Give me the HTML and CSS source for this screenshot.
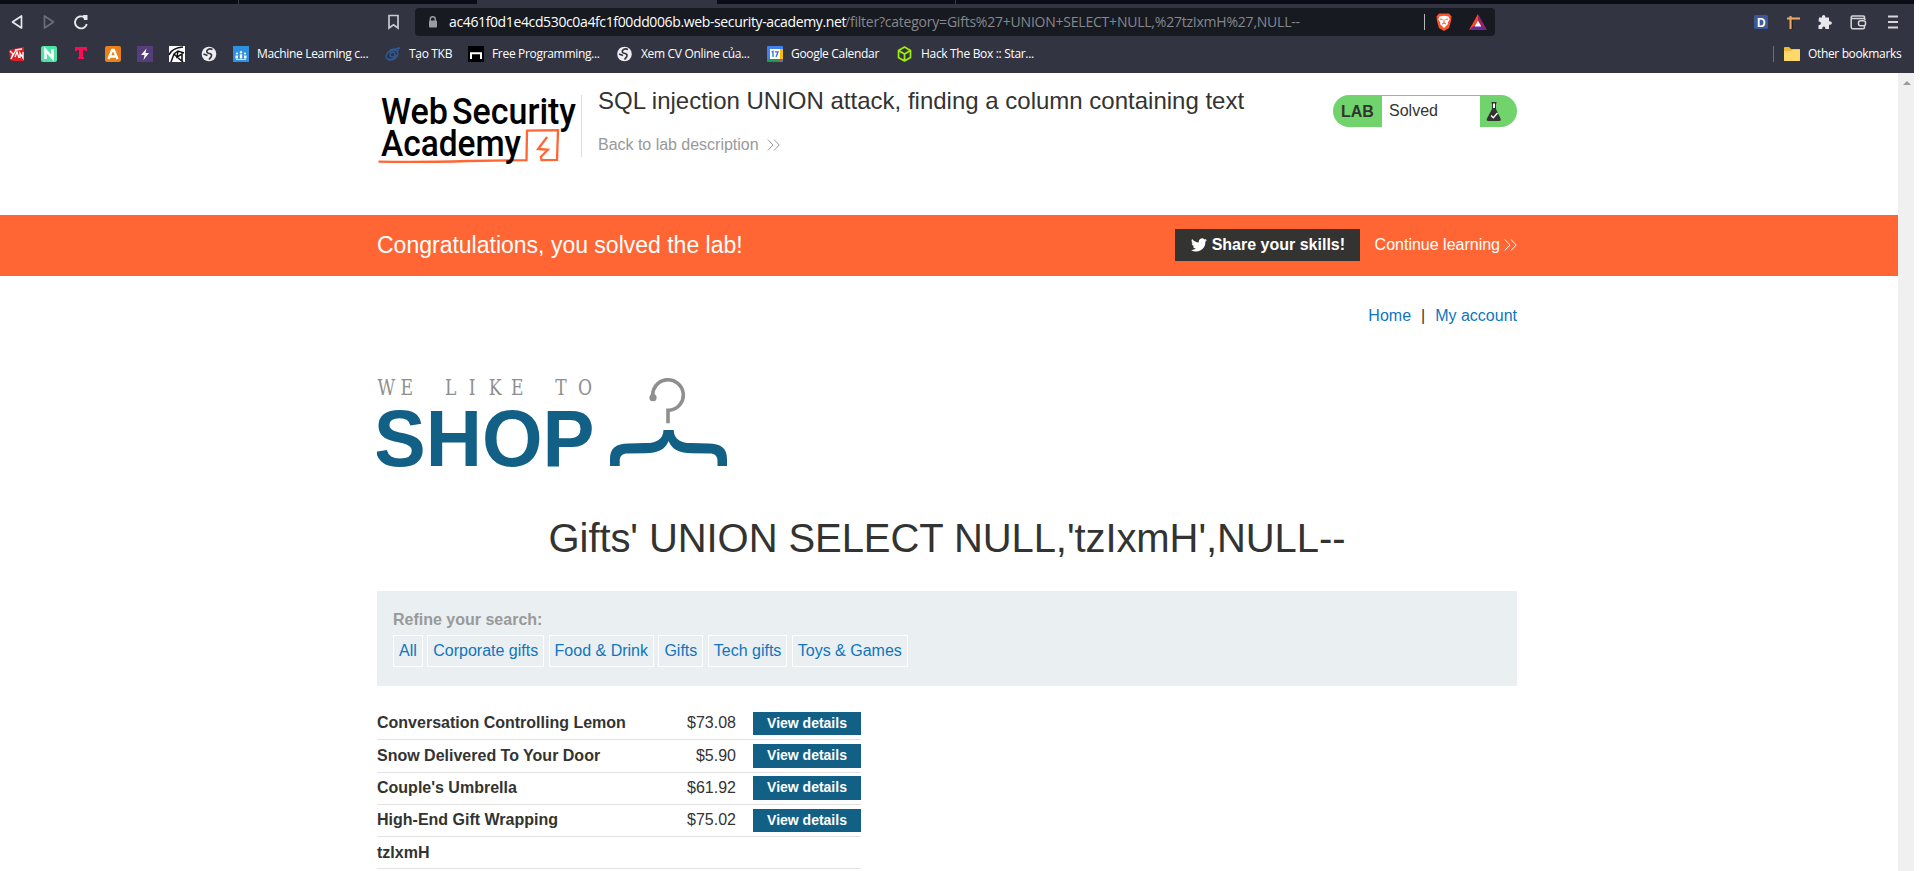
FILE: index.html
```
<!DOCTYPE html>
<html lang="en">
<head>
<meta charset="utf-8">
<title>SQL injection UNION attack, finding a column containing text</title>
<link rel="stylesheet" href="styles.css">
</head>
<body>
<div class="window">
  <div class="tabs"><div class="tab t1"></div><div class="tab t2"></div><div class="tab active"></div><div class="tab t4"></div></div>
  <div class="toolbar">
    <svg class="navicons" width="100" height="28" viewBox="0 0 100 28" fill="none" stroke-width="1.7" stroke-linejoin="round">
      <path d="M21.500 8v12L12.500 14z" stroke="#e8e8ec"/>
      <path d="M44.500 8v12L53.500 14z" stroke="#6b6d79"/>
      <path d="M84.500 9.500A6 6 0 1 0 86.800 16" stroke="#e8e8ec" stroke-width="1.900"/>
      <path d="M83 7h4.500v5H84z" fill="#e8e8ec"/>
    </svg>
    <svg class="mark" width="14" height="16" viewBox="0 0 14 16" fill="none" stroke="#c9cad0" stroke-width="1.700"><path d="M2.500 1.500h9v12.500l-4.500-3.200L2.500 14z"/></svg>
    <div class="address">
      <svg width="10" height="12" viewBox="0 0 10 12"><path d="M2.300 5V3.200a2.500 2.500 0 0 1 5 0V5" fill="none" stroke="#9a9ca4" stroke-width="1.400"/><rect x="1" y="4.500" width="8" height="7" rx="1" fill="#9a9ca4"/></svg>
      <div class="url"><span class="host">ac461f0d1e4cd530c0a4fc1f00dd006b.web-security-academy.net</span><span class="path">/filter?category=Gifts%27+UNION+SELECT+NULL,%27tzIxmH%27,NULL--</span></div>
      <div class="divider"></div>
      <svg class="lion" width="18" height="20" viewBox="0 0 18 20"><path d="M4 1.500h10l2.500 3L16 9l-2 7-5 3-5-3-2-7-.500-4.500z" fill="#fb542b"/><path d="M4.500 4.500L9 3.700l4.500.800 1.200 3-2 3 .300 1.500L9 16l-4-4 .300-1.500-2-3z" fill="#fff"/><path d="M5 7l2.500.600M13 7l-2.500.600M9 7.500v4M7 12l2-1 2 1" stroke="#fb542b" stroke-width="1" fill="none"/></svg>
      <svg class="bat" width="18" height="16" viewBox="0 0 18 16"><path d="M9 0L0 16l9-5.500z" fill="#ff4724"/><path d="M9 0l9 16-9-5.500z" fill="#9e1f63"/><path d="M0 16h18l-5-4H5z" fill="#662d91"/><path d="M9 6.500l3.300 6H5.700z" fill="#fff"/></svg>
    </div>
    <svg class="ext" width="150" height="28" viewBox="0 0 150 28">
      <rect x="0" y="7" width="14" height="14" rx="1.500" fill="#3b5998"/><text x="3" y="18.500" class="dletter">D</text>
      <path d="M36.500 8v13M33 10.500h13" stroke="#efaa62" stroke-width="2" fill="none"/><path d="M38.500 12v9" stroke="#222" stroke-width="1"/>
      <path d="M65 9.500h3c-.700-3.500 4-3.500 3.300 0H75v3.800c3.800-.700 3.800 4.200 0 3.500V21h-3.700c.500-3.300-3.500-3.300-3 0H64.500v-4c3.200.500 3.200-4 0-3.500z" fill="#e8e8ec"/>
      <g fill="none" stroke="#d5d5da" stroke-width="1.500"><path d="M110.500 10.500v-1.500q0-1-1.200-1h-10.800q-1.300 0-1.300 1.300v10q0 1.400 1.400 1.400h10.300q1.600 0 1.600-1.500v-1.500M97.500 10.500h12.200q1.300 0 1.300 1.500"/><rect x="104.500" y="12.700" width="7" height="5" rx="2"/></g>
      <path d="M134 8.500h10M134 14h10M134 19.500h10" stroke="#d5d5da" stroke-width="1.800"/>
    </svg>
  </div>
  <div class="bookmarks">
    <div class="bm"><svg width="16" height="16" viewBox="0 0 16 16"><path d="M0 4l9-2 6-1v14H5l-4-1z" fill="#dd1f26"/><path d="M1 5l3 3-2 5M7 4L2 13M6 11l2-5 2 6M11 12V7l3 5V6M6 4l7-1" stroke="#fff" stroke-width="1.300" fill="none"/></svg></div>
    <div class="bm"><svg width="16" height="16" viewBox="0 0 16 16"><rect width="16" height="16" rx="2" fill="#4fe3a5"/><path d="M4.500 13V4l7 8V3" stroke="#fff" stroke-width="2.600" fill="none"/></svg></div>
    <div class="bm"><svg width="16" height="16" viewBox="0 0 16 16"><path d="M2 1h12v4h-2V4h-2v7h1v2H5v-2h1V4H4v1H2z" fill="#ff0a54"/></svg></div>
    <div class="bm"><svg width="16" height="16" viewBox="0 0 16 16"><rect width="16" height="16" rx="2" fill="#e8811a"/><path d="M3.500 13L7.200 4h1.600l3.700 9M5.500 10.500h5" stroke="#fff" stroke-width="2.400" fill="none"/></svg></div>
    <div class="bm"><svg width="16" height="16" viewBox="0 0 16 16"><rect width="16" height="16" fill="#563d7c"/><path d="M9.500 2.500L4 9h3.500L6.500 14 12 7H8.500z" fill="#fff"/></svg></div>
    <div class="bm"><svg width="16" height="16" viewBox="0 0 16 16"><rect width="16" height="16" fill="#fff"/><path d="M0 9Q3 2 14 1M2 16L5 8l4-3 6 2M5 8l3 3 6 5M9 5l-1 6 5-3v7" stroke="#111" stroke-width="1.500" fill="none"/></svg></div>
    <div class="bm"><svg width="16" height="16" viewBox="0 0 16 16"><circle cx="8" cy="8" r="7.300" fill="#eeeef1"/><path d="M11.500 3.500Q8 2 6 4.500q-1 2.500 2.500 3 3 .500 1.500 3.500l-2 2.500M2.500 8l4 1.500" stroke="#323442" stroke-width="1.700" fill="none"/></svg></div>
    <div class="bm"><svg width="16" height="16" viewBox="0 0 16 16"><rect width="16" height="16" fill="#2f8fe0"/><g fill="#fff"><circle cx="4" cy="7.500" r="1.100"/><circle cx="8" cy="6.300" r="1.200"/><circle cx="12" cy="7.500" r="1.100"/><path d="M2.500 9.500h2.500v3H2.500zM6.800 8.300h2.400v4.200H6.800zM11 9.500h2.500v3H11zM3 13h10v.700H3z"/></g></svg><span>Machine Learning c...</span></div>
    <div class="bm"><svg width="16" height="16" viewBox="0 0 16 16" fill="none" stroke="#315b98" stroke-width="1.300"><ellipse cx="7" cy="9" rx="6.300" ry="4.500" transform="rotate(-30 7 9)"/><circle cx="7.500" cy="8.500" r="2.500"/><path d="M2 13Q8 15 12 9M5 4l10-2M13 1v4"/></svg><span>Tạo TKB</span></div>
    <div class="bm"><svg width="16" height="16" viewBox="0 0 16 16"><rect width="16" height="16" fill="#000"/><path d="M3 13V7.300h10V13" stroke="#fff" stroke-width="2" fill="none"/></svg><span>Free Programming...</span></div>
    <div class="bm"><svg width="16" height="16" viewBox="0 0 16 16"><circle cx="7.500" cy="8" r="7.300" fill="#eeeef1"/><path d="M11 3.500Q7.500 2 5.500 4.500q-1 2.500 2.500 3 3 .500 1.500 3.500l-2 2.500M2 8l4 1.500" stroke="#323442" stroke-width="1.700" fill="none"/></svg><span>Xem CV Online của...</span></div>
    <div class="bm"><svg width="16" height="16" viewBox="0 0 16 16"><rect width="16" height="16" rx="1" fill="#3f83f1"/><path d="M13 3h3v10h-3z" fill="#fbbc04"/><path d="M0 13h13v3H1l-1-1z" fill="#1e9c4c"/><path d="M13 13h3l-3 3z" fill="#ea4335"/><rect x="3" y="3" width="10" height="10" fill="#fff"/><path d="M4.500 6l1.500-.700V11M8 5.800h3L9 11" stroke="#2f6fe0" stroke-width="1.300" fill="none"/></svg><span>Google Calendar</span></div>
    <div class="bm"><svg width="16" height="16" viewBox="0 0 16 16" fill="none" stroke="#9fef00" stroke-width="1.700" stroke-linejoin="round"><path d="M7.500 1l6 3.400v7L7.500 15l-6-3.600v-7zM1.500 4.500L7.500 8l6-3.500M7.500 8v7"/></svg><span>Hack The Box :: Star...</span></div>
    <div class="other"><svg width="16" height="14" viewBox="0 0 16 14"><path d="M0 1q0-1 1-1h4l2 2h8q1 0 1 1v10q0 1-1 1H1q-1 0-1-1z" fill="#f0b93a"/><path d="M0 4h7l2-1.500h7V13q0 1-1 1H1q-1 0-1-1z" fill="#ffd968"/></svg><span>Other bookmarks</span></div>
  </div>
  <div class="viewport">
    <div class="page">
      <header class="wrap head">
        <svg class="wsa" width="203" height="75" viewBox="377 91 203 75">
          <path d="M378.500 161.600q40 .800 90-.600l58-.800.500-29.500 31-.500-1 29.600-15.500.300-.600-3.300 7-7-9.800-.800 9-12" fill="none" stroke="#ff6633" stroke-width="2.300"/>
          <g class="wsatext"><text x="381" y="123.500" textLength="67" lengthAdjust="spacingAndGlyphs">Web</text><text x="452" y="123.500" textLength="124" lengthAdjust="spacingAndGlyphs">Security</text><text x="381" y="156" textLength="140" lengthAdjust="spacingAndGlyphs">Academy</text></g>
        </svg>
        <div class="titles">
          <h2>SQL injection UNION attack, finding a column containing text</h2>
          <a class="back">Back to lab description <svg width="13" height="12" viewBox="0 0 13 12"><path d="M.800.500L6 6l-5.200 5.500M7 .500L12.200 6 7 11.500"/></svg></a>
        </div>
        <div class="lab"><b>LAB</b><span>Solved</span><svg width="16" height="21" viewBox="0 0 16 21"><path d="M5.500 1h5v1.500H10V8l4.500 9.500q1 2.500-1.500 2.500H2.500Q0 20 1 17.500L6 8V2.500h-.500z" fill="#333332"/><path d="M7 2.500h2V7H7z" fill="#fff"/><path d="M5 14.500l2.300 2.300L11.500 12" fill="none" stroke="#fff" stroke-width="1.300"/></svg></div>
      </header>
      <div class="banner"><div class="wrap brow">
        <h4>Congratulations, you solved the lab!</h4>
        <button class="share"><svg width="16" height="14" viewBox="0 0 24 20"><path d="M24 2.400a10 10 0 0 1-2.800.800A5 5 0 0 0 23.300.500a10 10 0 0 1-3.100 1.200 4.900 4.900 0 0 0-8.400 4.500A14 14 0 0 1 1.700 1a4.900 4.900 0 0 0 1.500 6.600A5 5 0 0 1 1 7v.100a4.900 4.900 0 0 0 3.900 4.800 5 5 0 0 1-2.200.100 4.900 4.900 0 0 0 4.600 3.400A10 10 0 0 1 0 17.500a14 14 0 0 0 21.500-12.400A10 10 0 0 0 24 2.400z" fill="#fff"/></svg>Share your skills!</button>
        <a class="cont">Continue learning<svg width="13" height="12" viewBox="0 0 13 12"><path d="M.800.500L6 6l-5.200 5.500M7 .500L12.200 6 7 11.500"/></svg></a>
      </div></div>
      <nav class="wrap links"><a>Home</a><i>|</i><a>My account</a></nav>
      <div class="wrap shop">
        <svg width="352" height="90" viewBox="377 378 352 90">
          <text class="we" transform="translate(377.500 394.700) scale(.78 1)" y="0" x="0 29.500 86.500 117 142.500 171 228 257">WELIKETO</text>
          <text class="big" transform="translate(373.700 466) scale(.96 1)" x="0" y="0" textLength="230" lengthAdjust="spacingAndGlyphs">SHOP</text>
          <path d="M652.800 397A15.300 15.300 0 1 1 669.500 410.300H668v13" fill="none" stroke="#8f8f8f" stroke-width="3.600"/><circle cx="653" cy="397.700" r="3.600" fill="#8f8f8f"/>
          <path d="M663.500 430h10.200c.300 10 8 13 17 13.100l18 .300c12 .200 18.300 4.500 18.300 15.600v7h-9.500v-5c0-5-2.500-7.500-8-7.500l-18-.200c-12-.200-19.500-3.600-22.900-12.300-3.400 8.700-10.900 12.100-22.900 12.300l-18 .200c-5.500 0-8 2.500-8 7.500v5H610v-7c0-11.100 6.300-15.400 18.300-15.600l18-.300c9-.100 16.900-3.100 17.200-13.100z" fill="#126086"/>
        </svg>
      </div>
      <h1>Gifts' UNION SELECT NULL,'tzIxmH',NULL--</h1>
      <section class="wrap filter">
        <label>Refine your search:</label>
        <div class="cats"><a>All</a><a>Corporate gifts</a><a>Food &amp; Drink</a><a>Gifts</a><a>Tech gifts</a><a>Toys &amp; Games</a></div>
      </section>
      <div class="wrap"><div class="products">
        <div class="row"><b>Conversation Controlling Lemon</b><span>$73.08</span><a>View details</a></div>
        <div class="row"><b>Snow Delivered To Your Door</b><span>$5.90</span><a>View details</a></div>
        <div class="row"><b>Couple's Umbrella</b><span>$61.92</span><a>View details</a></div>
        <div class="row"><b>High-End Gift Wrapping</b><span>$75.02</span><a>View details</a></div>
        <div class="row last"><b>tzIxmH</b></div>
      </div></div>
    </div>
    <div class="scroll"><svg width="8" height="4" viewBox="0 0 8 4"><path d="M4 0l4 4H0z" fill="#9b9b9b"/></svg></div>
  </div>
</div>
</body>
</html>
```
FILE: styles.css
```
* { box-sizing: border-box; }
body { margin: 0; background: #fff; color: #333332; font: 16px/1.15 "Liberation Sans", Arial, sans-serif; overflow: hidden; }
svg { display: block; flex: none; }
.window { width: 1914px; height: 871px; display: flex; flex-direction: column; overflow: hidden; }

.tabs { height: 4px; flex: none; background: #0b0c15; display: flex; }
.t1 { width: 239px; border-right: 1px solid #3c3d47; }
.t2 { width: 238px; }
.active { width: 240px; background: #323442; }
.t4 { width: 239px; border-right: 1px solid #3c3d47; }

.toolbar { height: 32px; flex: none; background: #323442; padding-top: 4px; display: flex; font-family: "Open Sans", "Noto Sans", sans-serif; }
.mark { margin: 6px 14px 0 286px; width: 15px; }
.address { width: 1080px; height: 28px; border-radius: 4px; background: #171a21; display: flex; align-items: center; padding-left: 13px; }
.url { width: 974px; margin-left: 11px; font-size: 14px; line-height: 28px; white-space: nowrap; color: #86888d; }
.host { color: #fff; display: inline-block; width: 396px; letter-spacing: -0.37px; }
.path { letter-spacing: -0.22px; }
.divider { width: 1px; height: 16px; background: #b5b6ba; margin-left: 1px; }
.lion { margin-left: 10px; }
.bat { margin-left: 16px; }
.ext { margin-left: 259px; }
.dletter { font: bold 12px "Liberation Sans", sans-serif; fill: #fff; }

.bookmarks { height: 37px; flex: none; background: #323442; padding-left: 9px; padding-bottom: 1px; display: grid; grid-template-columns: 32px 32px 32px 32px 32px 32px 32px 152px 83px 149px 150px 130px 878px 140px; align-items: center; color: #fff; font: 12px/16px "Open Sans", "Noto Sans", sans-serif; white-space: nowrap; }
.bm { display: flex; align-items: center; gap: 8px; letter-spacing: -0.32px; }
.other { display: flex; align-items: center; gap: 8px; height: 16px; border-left: 1px solid #6c6e79; padding-left: 10px; margin-left: -2px; letter-spacing: -0.35px; }

.viewport { display: flex; flex: 1; min-height: 0; }
.page { width: 1898px; overflow: hidden; }
.scroll { width: 16px; background: #f0f0f0; padding: 8px 0 0 5px; }
.wrap { width: 1140px; margin: 0 auto 0 377px; }

.head { height: 142px; padding-top: 18px; display: flex; }
.titles { margin-top: 4px; height: 62px; border-left: 1px solid #dcdcdc; padding-left: 16px; margin-left: 1px; width: 752px; }
h2 { font-weight: 400; font-size: 24px; line-height: 28px; margin: -8px 0 17px; white-space: nowrap; }
.back { color: #999; display: flex; align-items: center; gap: 8px; line-height: 26px; letter-spacing: -0.02px; }
.back path, .cont path { fill: none; stroke: #999; stroke-width: 1; }
.lab { margin-top: 4px; width: 184px; height: 32px; border-radius: 16px; background: #70d36c; display: grid; grid-template-columns: 49px 98px 1fr; padding: 1px 0; line-height: 30px; }
.lab b { padding: 1px 0 0 8px; }
.lab span { background: #fff; padding-left: 7px; line-height: 30px; }
.lab svg { margin: 5px 0 0 6px; }

.banner { background: #ff6633; height: 61px; color: #fff; }
.brow { display: flex; height: 61px; padding-top: 14px; }
h4 { margin: 0; font-weight: 400; font-size: 23px; line-height: 32px; width: 798px; }
.share { border: 0; padding: 0 0 0 16px; width: 185px; height: 32px; background: #333332; color: #fff; font: bold 16px "Liberation Sans", sans-serif; display: flex; align-items: center; gap: 5px; white-space: nowrap; }
.cont { margin-left: 15px; display: flex; align-items: center; height: 32px; gap: 4px; white-space: nowrap; }
.cont path { stroke: #fff; }

.links { display: flex; justify-content: flex-end; margin-top: 30px; height: 20px; line-height: 20px; color: #0e75be; }
.links i { font-style: normal; color: #333332; margin: 0 10px; }
.shop { padding-top: 52px; }
.wsatext { font: 500 36px Roboto, sans-serif; fill: #000; }
.we { font: 22px "DejaVu Serif", serif; fill: #8f8f8f; }
.big { font: bold 80.500px "Liberation Sans", sans-serif; fill: #126086; }
h1 { margin: 46px 0 0; font-weight: 400; font-size: 40px; letter-spacing: -0.08px; line-height: 48px; height: 77px; text-align: center; width: 1894px; }
.filter { background: #eaeff2; height: 95px; padding: 20px 16px 0; }
.filter label { color: #999; font-weight: bold; display: block; line-height: 18px; margin-bottom: 6px; }
.cats { display: flex; gap: 4.450px; }
.cats a { border: 1px solid #fff; height: 32px; line-height: 30px; padding: 0 5px; color: #0e75be; white-space: nowrap; }
.products { width: 484px; padding-top: 22px; }
.row { height: 32.300px; border-bottom: 1px solid #e3e3e3; display: grid; grid-template-columns: 280px 79px 108px; column-gap: 0; align-items: center; }
.row span { text-align: right; }
.row a { margin-left: 17px; width: 108px; background: #126086; color: #fff; font-weight: bold; font-size: 14px; height: 23.500px; line-height: 22px; text-align: center; }
```
